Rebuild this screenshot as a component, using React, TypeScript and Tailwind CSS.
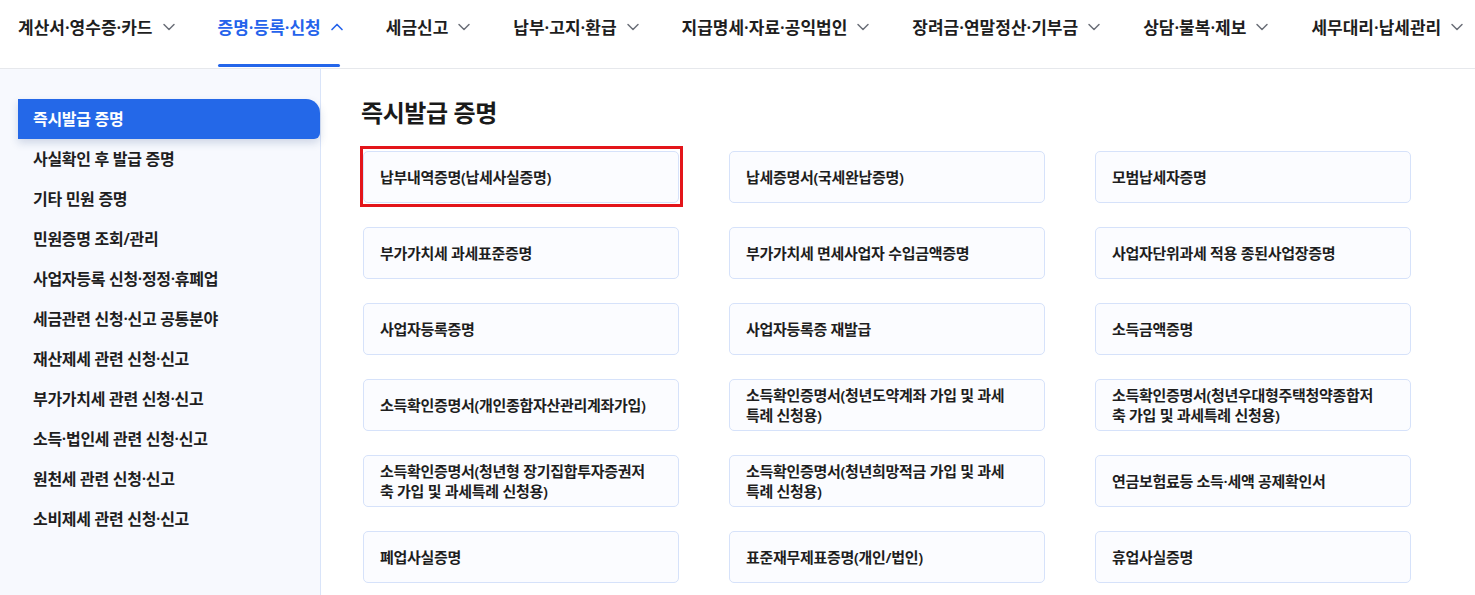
import { ChevronDown, ChevronUp } from "lucide-react";

const menus = [
  "계산서·영수증·카드",
  "증명·등록·신청",
  "세금신고",
  "납부·고지·환급",
  "지급명세·자료·공익법인",
  "장려금·연말정산·기부금",
  "상담·불복·제보",
  "세무대리·납세관리",
];

const sideItems = [
  "즉시발급 증명",
  "사실확인 후 발급 증명",
  "기타 민원 증명",
  "민원증명 조회/관리",
  "사업자등록 신청·정정·휴폐업",
  "세금관련 신청·신고 공통분야",
  "재산제세 관련 신청·신고",
  "부가가치세 관련 신청·신고",
  "소득·법인세 관련 신청·신고",
  "원천세 관련 신청·신고",
  "소비제세 관련 신청·신고",
];

const certs = [
  "납부내역증명(납세사실증명)",
  "납세증명서(국세완납증명)",
  "모범납세자증명",
  "부가가치세 과세표준증명",
  "부가가치세 면세사업자 수입금액증명",
  "사업자단위과세 적용 종된사업장증명",
  "사업자등록증명",
  "사업자등록증 재발급",
  "소득금액증명",
  "소득확인증명서(개인종합자산관리계좌가입)",
  "소득확인증명서(청년도약계좌 가입 및 과세특례 신청용)",
  "소득확인증명서(청년우대형주택청약종합저축 가입 및 과세특례 신청용)",
  "소득확인증명서(청년형 장기집합투자증권저축 가입 및 과세특례 신청용)",
  "소득확인증명서(청년희망적금 가입 및 과세특례 신청용)",
  "연금보험료등 소득·세액 공제확인서",
  "폐업사실증명",
  "표준재무제표증명(개인/법인)",
  "휴업사실증명",
];

const font = "font-['Noto_Sans','Noto_Sans_CJK_KR',sans-serif]";

export default function App() {
  return (
    <div className={`${font} w-[1475px] h-[595px] overflow-hidden bg-white text-[#1e1e1e]`}>
      {/* Top menu */}
      <header className="h-[69px] border-b border-[#e6e8ec] flex items-stretch pl-[18px]">
        {menus.map((m, i) => {
          const active = i === 1;
          return (
            <div
              key={m}
              className={`relative shrink-0 whitespace-nowrap flex items-center gap-[6px] mr-[39px] h-full pb-[14px] ${
                active ? "text-[#2563eb]" : "text-[#1e1e1e]"
              }`}
            >
              <span className="text-[17px] font-semibold leading-none">{m}</span>
              {active ? (
                <ChevronUp size={20} strokeWidth={2} className="text-[#2563eb]" />
              ) : (
                <ChevronDown size={20} strokeWidth={1.8} className="text-[#6b6f78]" />
              )}
              {active && (
                <div className="absolute left-0 right-[7px] bottom-[1px] h-[3px] rounded-full bg-[#2466ea]" />
              )}
            </div>
          );
        })}
      </header>

      <div className="flex h-[526px]">
        {/* Sidebar */}
        <aside className="w-[321px] shrink-0 bg-[#f7f9fe] border-r border-[#d9e4f9] pl-[18px] pt-[30px]">
          {sideItems.map((s, i) => (
            <div
              key={s}
              className={`h-[40px] flex items-center pl-[15px] text-[16px] tracking-[-0.3px] font-semibold ${
                i === 0
                  ? "bg-[#2468e8] text-white rounded-tr-[14px] rounded-br-[6px] shadow-[0_4px_8px_rgba(30,60,120,0.18)]"
                  : "text-[#1e1e1e]"
              }`}
            >
              {s}
            </div>
          ))}
        </aside>

        {/* Main */}
        <main className="flex-1 pl-[42px] pt-[27px]">
          <h2 className="text-[24px] font-bold tracking-[-0.4px] leading-[34px] -ml-[2px] text-[#1a1a1a]">
            즉시발급 증명
          </h2>
          <div className="mt-[21px] grid grid-cols-[316px_316px_316px] gap-x-[50px] gap-y-[24px]">
            {certs.map((c, i) => (
              <div
                key={c}
                className="relative h-[52px] rounded-[5px] border border-[#d6e2fa] bg-[#fbfcff] flex items-center pl-[16px] pr-[28px] text-[15px] leading-[20px] font-semibold tracking-[-0.3px] text-[#1e1e1e] break-all"
              >
                <span>{c}</span>
                {i === 0 && (
                  <div className="absolute -left-[4px] -right-[5px] -top-[6px] -bottom-[5px] border-[3px] border-[#e3151a]" />
                )}
              </div>
            ))}
          </div>
        </main>
      </div>
    </div>
  );
}
